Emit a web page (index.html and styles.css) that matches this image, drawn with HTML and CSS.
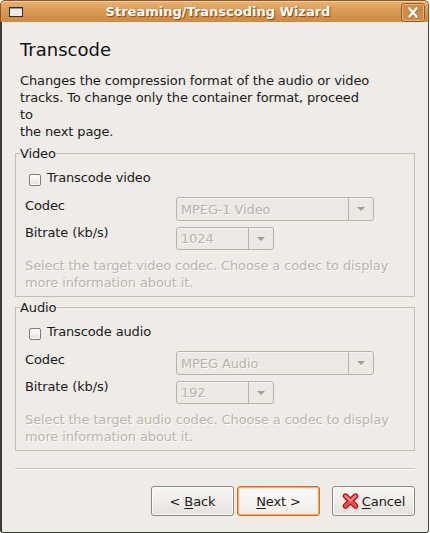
FILE: index.html
```html
<!DOCTYPE html>
<html>
<head>
<meta charset="utf-8">
<link rel="stylesheet" href="styles.css">
</head>
<body>
<div class="window">
  <div class="titlebar">
    <svg class="win-icon" width="14" height="10" viewBox="0 0 14 10"><rect x="0.5" y="0.5" width="13" height="9" fill="#ece9e6" stroke="#2e2e2e"/><rect x="1" y="1" width="12" height="1" fill="#9a9a9a"/></svg>
    <div class="title">Streaming/Transcoding Wizard</div>
    <div class="close">
      <svg width="24" height="19" viewBox="0 0 24 19"><rect x="0.5" y="0.5" width="23" height="18" rx="3" fill="#cf8c47" stroke="#8e5b27"/><rect x="1.5" y="1.5" width="21" height="16" rx="2" fill="none" stroke="#e6b27c"/><path d="M8.5 5.5 L15.5 13.5 M15.5 5.5 L8.5 13.5" stroke="#6e4720" stroke-width="3" stroke-linecap="round" transform="translate(0.6,0.6)" opacity="0.5"/><path d="M8.5 5.5 L15.5 13.5 M15.5 5.5 L8.5 13.5" stroke="#ffffff" stroke-width="2.6" stroke-linecap="round"/></svg>
    </div>
  </div>
  <div class="content">
    <h1 class="heading">Transcode</h1>
    <p class="desc">Changes the compression format of the audio or video<br>tracks. To change only the container format, proceed<br>to<br>the next page.</p>

    <fieldset class="frame">
      <legend class="frame-label">Video</legend>
      <div class="frame-body">
        <label class="check-row"><span class="checkbox"></span><span>Transcode video</span></label>
        <div class="grid">
          <div class="lbl">Codec</div>
          <div class="combo combo-wide"><div class="combo-entry">MPEG-1 Video</div><div class="combo-btn"><span class="arrow"></span></div></div>
          <div class="lbl lbl-2">Bitrate (kb/s)</div>
          <div class="combo combo-narrow"><div class="combo-entry">1024</div><div class="combo-btn"><span class="arrow"></span></div></div>
        </div>
        <p class="help">Select the target video codec. Choose a codec to display<br>more information about it.</p>
      </div>
    </fieldset>

    <fieldset class="frame frame-audio">
      <legend class="frame-label">Audio</legend>
      <div class="frame-body">
        <label class="check-row"><span class="checkbox"></span><span>Transcode audio</span></label>
        <div class="grid">
          <div class="lbl">Codec</div>
          <div class="combo combo-wide"><div class="combo-entry">MPEG Audio</div><div class="combo-btn"><span class="arrow"></span></div></div>
          <div class="lbl lbl-2">Bitrate (kb/s)</div>
          <div class="combo combo-narrow"><div class="combo-entry">192</div><div class="combo-btn"><span class="arrow"></span></div></div>
        </div>
        <p class="help">Select the target audio codec. Choose a codec to display<br>more information about it.</p>
      </div>
    </fieldset>

    <div class="separator"></div>

    <div class="buttons">
      <button class="btn"><span>&lt; <u>B</u>ack</span></button>
      <button class="btn btn-default"><span><u>N</u>ext &gt;</span></button>
      <button class="btn btn-cancel"><svg class="cancel-icon" width="17" height="16" viewBox="0 0 17 16"><path d="M3.5 3 L13.5 13 M13.5 3 L3.5 13" stroke="#a30d0d" stroke-width="5.4" stroke-linecap="round"/><path d="M3.5 3 L13.5 13 M13.5 3 L3.5 13" stroke="#e8504f" stroke-width="3.4" stroke-linecap="round"/><path d="M3.2 2.7 L8.5 8 M13.8 2.7 L9 7.5" stroke="#f7a3a0" stroke-width="1.2" stroke-linecap="round"/></svg><span><u>C</u>ancel</span></button>
    </div>
  </div>
</div>
</body>
</html>
```
FILE: styles.css
```css
html, body {
  margin: 0;
  padding: 0;
  background: #ffffff;
}

body {
  font-family: "DejaVu Sans", sans-serif;
  font-size: 13px;
  line-height: 17px;
  color: #1a1a1a;
  letter-spacing: -0.12px;
}

.window {
  width: 429px;
  height: 533px;
  display: flex;
  flex-direction: column;
}

.titlebar {
  height: 22px;
  flex: none;
  box-sizing: border-box;
  display: flex;
  align-items: center;
  position: relative;
  background: linear-gradient(#e9b275 0%, #dc9a55 45%, #cf8a45 100%);
  border: 1px solid #8a5a2a;
  border-bottom: none;
  border-radius: 5px 5px 0 0;
  box-shadow: inset 0 1px 0 #f3cb9c;
}

.win-icon {
  margin-left: 8px;
  margin-top: 1px;
  flex: none;
}

.title {
  flex: 1;
  text-align: center;
  font-weight: bold;
  font-size: 13px;
  letter-spacing: 0;
  color: #ffffff;
  text-shadow: 1px 1px 1px #7a4a1c;
  margin-left: 7px;
  margin-right: -5px;
}

.close {
  width: 24px;
  height: 19px;
  margin-right: 3px;
  margin-top: 1px;
  flex: none;
}

.close svg {
  display: block;
}

.content {
  flex: 1;
  background: #efebe7;
  border-left: 2px solid #3c3c3c;
  border-right: 1px solid #4a4a4a;
  border-bottom: 1px solid #3c3c3c;
  border-radius: 0 0 3px 3px;
  padding: 0 13px 0 13px;
  display: flex;
  flex-direction: column;
}

.heading {
  margin: 17px 0 0 5px;
  font-size: 18px;
  line-height: 22px;
  font-weight: normal;
  letter-spacing: 0;
  color: #111;
}

.desc {
  margin: 11px 0 0 5px;
  white-space: nowrap;
}

.frame {
  margin: 5px 0 0 0;
  padding: 0;
  border: 1px solid #c6beb6;
  min-width: 0;
}

.frame-audio {
  margin-top: 2px;
}

.frame-label {
  margin-left: 4px;
  padding: 0;
  line-height: 17px;
}

.frame-body {
  padding: 7px 9px 5px 9px;
  display: flex;
  flex-direction: column;
}

.check-row {
  display: flex;
  align-items: flex-start;
  gap: 6px;
  height: 17px;
  padding-left: 4px;
}

.checkbox {
  width: 10px;
  height: 10px;
  margin-top: 5px;
  border: 1px solid #7f7a74;
  border-radius: 2px;
  background: linear-gradient(#ffffff, #e4dfda);
  box-shadow: inset 0 0 0 1px #fbfaf9;
  flex: none;
}

.grid {
  margin-top: 11px;
  display: grid;
  grid-template-columns: 151px auto;
  row-gap: 6px;
  align-items: start;
}

.lbl-2 {
  margin-top: -3px;
}

.combo {
  display: flex;
  box-sizing: border-box;
  border: 1px solid #b9b1a9;
  border-radius: 3px;
  background: #ece8e3;
  box-shadow: inset 0 1px 0 #f7f5f3;
  color: #b8b2aa;
}

.combo-wide {
  width: 198px;
  height: 24px;
}

.combo-narrow {
  width: 98px;
  height: 23px;
}

.combo-entry {
  flex: 1;
  padding-left: 4px;
  display: flex;
  align-items: center;
  text-shadow: 1px 1px 0 #fbfaf8;
}

.combo-btn {
  width: 24px;
  flex: none;
  border-left: 1px solid #b9b1a9;
  display: flex;
  align-items: center;
  justify-content: center;
}

.arrow {
  width: 0;
  height: 0;
  border-left: 4px solid transparent;
  border-right: 4px solid transparent;
  border-top: 4px solid #a39c94;
}

.help {
  margin: 7px 0 0 0;
  color: #bab4ac;
  text-shadow: 1px 1px 0 #fcfbfa;
  white-space: nowrap;
}

.separator {
  margin-top: 17px;
  height: 0;
  border-top: 1px solid #cbc4bc;
  border-bottom: 1px solid #fbfaf9;
}

.buttons {
  margin-top: 16px;
  display: flex;
  justify-content: flex-end;
  gap: 3px;
  padding-right: 0;
}

.btn {
  font-family: "DejaVu Sans", sans-serif;
  font-size: 13px;
  letter-spacing: -0.12px;
  color: #1a1a1a;
  width: 83px;
  height: 30px;
  box-sizing: border-box;
  border: 1px solid #8e8780;
  border-radius: 3px;
  background: linear-gradient(#f7f6f4 0%, #efece9 50%, #e5e1dd 100%);
  box-shadow: inset 0 0 0 1px #fbfaf9;
  padding: 0;
  display: flex;
  align-items: center;
  justify-content: center;
  gap: 3px;
}

.btn u {
  text-decoration-thickness: 1px;
  text-underline-offset: 2px;
}

.btn-default {
  border-color: #d06c1c;
  box-shadow: inset 0 0 0 1px #f0ad6f, inset 0 0 0 2px #fbe7d4;
  background: linear-gradient(#fbf9f7, #f1ede9);
}

.btn-cancel {
  margin-left: 9px;
}

.cancel-icon {
  flex: none;
}
```
